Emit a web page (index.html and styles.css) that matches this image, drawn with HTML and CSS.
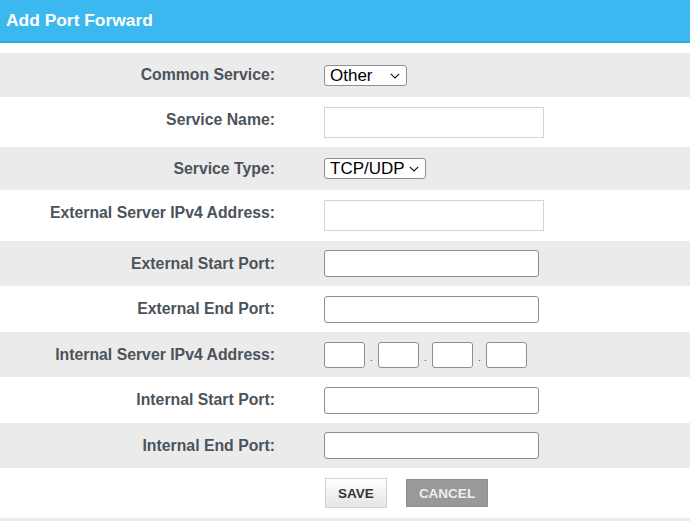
FILE: index.html
```html
<!DOCTYPE html>
<html>
<head>
<meta charset="utf-8">
<title>Add Port Forward</title>
<link rel="stylesheet" href="styles.css">
</head>
<body>
<div class="header"><h1 class="title">Add Port Forward</h1></div>
<div class="form">
  <div class="row gray h44">
    <div class="label">Common Service:</div>
    <div class="field">
      <span class="sel-wrap">
        <select class="sel sel-other"><option>Other</option><option>HTTP</option><option>FTP</option></select>
        <svg class="chev" width="10" height="6" viewBox="0 0 10 6"><path d="M0.8 0.8 L5 5 L9.2 0.8" fill="none" stroke="#111" stroke-width="1.1"/></svg>
      </span>
    </div>
  </div>
  <div class="row h50">
    <div class="label up">Service Name:</div>
    <div class="field"><input class="txt-flat" type="text"></div>
  </div>
  <div class="row gray h43">
    <div class="label">Service Type:</div>
    <div class="field">
      <span class="sel-wrap">
        <select class="sel sel-type"><option>TCP/UDP</option><option>TCP</option><option>UDP</option></select>
        <svg class="chev" width="10" height="6" viewBox="0 0 10 6"><path d="M0.8 0.8 L5 5 L9.2 0.8" fill="none" stroke="#111" stroke-width="1.1"/></svg>
      </span>
    </div>
  </div>
  <div class="row h51">
    <div class="label up">External Server IPv4 Address:</div>
    <div class="field"><input class="txt-flat" type="text"></div>
  </div>
  <div class="row gray h45">
    <div class="label">External Start Port:</div>
    <div class="field"><input class="txt" type="text"></div>
  </div>
  <div class="row h46">
    <div class="label">External End Port:</div>
    <div class="field"><input class="txt" type="text"></div>
  </div>
  <div class="row gray h45">
    <div class="label">Internal Server IPv4 Address:</div>
    <div class="field ip">
      <input class="oct" type="text"><span class="dot">.</span>
      <input class="oct" type="text"><span class="dot">.</span>
      <input class="oct" type="text"><span class="dot">.</span>
      <input class="oct" type="text">
    </div>
  </div>
  <div class="row h46">
    <div class="label">Internal Start Port:</div>
    <div class="field"><input class="txt" type="text"></div>
  </div>
  <div class="row gray h45">
    <div class="label">Internal End Port:</div>
    <div class="field"><input class="txt" type="text"></div>
  </div>
  <div class="row h50">
    <div class="label"></div>
    <div class="field buttons">
      <button class="btn save">SAVE</button>
      <button class="btn cancel">CANCEL</button>
    </div>
  </div>
  <div class="footer-bar"></div>
</div>
</body>
</html>
```
FILE: styles.css
```css
html, body {
  margin: 0;
  padding: 0;
  background: #ffffff;
  font-family: "Liberation Sans", Arial, sans-serif;
}
.header {
  height: 41px;
  background: #3bb8f0;
  border-bottom: 2px solid #2eaae3;
  display: flex;
  align-items: center;
}
.title {
  margin: 0 0 0 6px;
  font-size: 17.4px;
  font-weight: bold;
  color: #ffffff;
}
.form {
  margin-top: 10px;
}
.row {
  display: flex;
  align-items: center;
  box-sizing: border-box;
}
.row.gray { background: #ebebeb; }
.h43 { height: 43px; }
.h44 { height: 44px; }
.h45 { height: 45px; }
.h46 { height: 46px; }
.h50 { height: 50px; }
.h51 { height: 51px; }
.label {
  width: 275px;
  flex: none;
  text-align: right;
  font-size: 15.8px;
  font-weight: bold;
  color: #4b535b;
}
.label.up { padding-bottom: 5px; }
.field {
  margin-left: 49px;
  display: flex;
  align-items: center;
}
.sel-wrap {
  position: relative;
  display: inline-flex;
}
.sel {
  -webkit-appearance: none;
  appearance: none;
  box-sizing: border-box;
  font-family: "Liberation Sans", Arial, sans-serif;
  font-size: 17px;
  height: 21px;
  line-height: 19px;
  color: #000;
  background: #fff;
  border: 1px solid #8f8f8f;
  border-radius: 3px;
  padding: 0 0 0 5px;
  margin: 0;
}
.sel-other { width: 83px; }
.sel-type { width: 102px; }
.chev {
  position: absolute;
  right: 7px;
  top: 8px;
  pointer-events: none;
}
.txt-flat {
  box-sizing: border-box;
  width: 220px;
  height: 31px;
  margin: 0;
  border: 1px solid #d4d4d4;
  border-radius: 0;
  background: #fff;
  padding: 0 4px;
}
.txt {
  box-sizing: border-box;
  width: 215px;
  height: 27px;
  margin: 0;
  border: 1px solid #8e8e8e;
  border-radius: 3px;
  background: #fff;
  padding: 0 4px;
}
.oct {
  box-sizing: border-box;
  width: 41px;
  height: 26px;
  margin: 0;
  border: 1px solid #8e8e8e;
  border-radius: 3px;
  background: #fff;
  padding: 0 3px;
}
.dot {
  width: 13px;
  text-align: center;
  font-size: 10px;
  color: #444;
  align-self: flex-end;
  line-height: 10px;
  margin-bottom: 5px;
}
.buttons { gap: 19px; margin-left: 50px; }
.btn {
  font-family: "Liberation Sans", Arial, sans-serif;
  font-size: 13.5px;
  font-weight: bold;
  margin: 0;
  padding: 0;
  cursor: pointer;
}
.save {
  width: 62px;
  height: 30px;
  color: #333333;
  background: linear-gradient(#ffffff, #e4e4e4);
  border: 1px solid #d2d2d2;
  border-radius: 0;
}
.cancel {
  width: 82px;
  height: 28px;
  color: #eeeeee;
  background: #999999;
  border: 1px solid #919191;
  border-radius: 0;
}
.footer-bar {
  height: 3px;
  background: #ebebeb;
}
```
